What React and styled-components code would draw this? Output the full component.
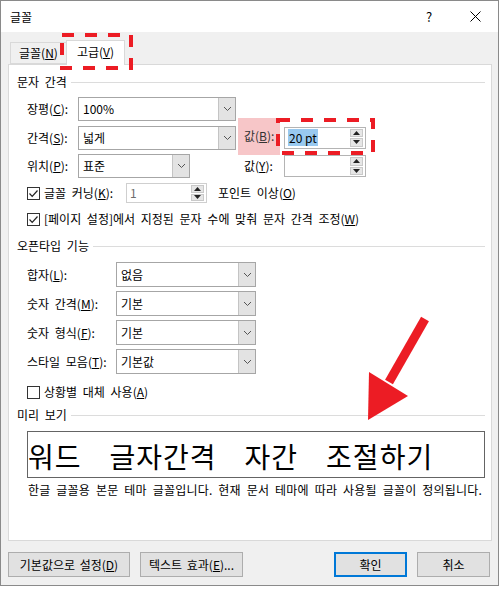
import styled, { createGlobalStyle } from 'styled-components';

const GlobalStyle = createGlobalStyle`
  html, body {
    margin: 0;
    padding: 0;
    background: #ffffff;
  }
  body {
    font-family: "Malgun Gothic", "Noto Sans CJK KR", "Noto Sans", sans-serif;
    font-size: 12px;
    word-spacing: 3px;
    color: #000;
  }
`;

// 창 전체
const Window = styled.div`
  position: relative;
  width: 497px;
  height: 584px;
  border: 1px solid #8a8a8a;
  background: #f0f0f0;
  display: flex;
  flex-direction: column;
`;

const TitleBar = styled.div`
  height: 31px;
  background: #fff;
  display: flex;
  align-items: center;
  padding-left: 9px;
  font-size: 12px;
`;

const TitleText = styled.div`
  flex: 1;
  line-height: 16px;
`;

const TitleButton = styled.div`
  width: 46px;
  height: 31px;
  display: flex;
  align-items: center;
  justify-content: center;
  font-size: 13px;
`;

const Body = styled.div`
  flex: 1;
  display: flex;
  flex-direction: column;
  padding: 8px 6px 8px 7px;
`;

const TabStrip = styled.div`
  display: flex;
  align-items: flex-end;
  height: 24px;
  padding-left: 2px;
  position: relative;
  z-index: 1;
`;

const Tab = styled.div`
  height: ${p => (p.$active ? '25px' : '22px')};
  margin-bottom: ${p => (p.$active ? '-1px' : '0')};
  padding: 0 ${p => (p.$active ? '10px' : '8px')};
  background: ${p => (p.$active ? '#fff' : '#f0f0f0')};
  border: 1px solid #d9d9d9;
  border-bottom: ${p => (p.$active ? 'none' : '1px solid #d9d9d9')};
  border-right: ${p => (p.$active ? '1px solid #d9d9d9' : 'none')};
  box-sizing: border-box;
  display: flex;
  align-items: ${p => (p.$active ? 'center' : 'flex-end')};
  padding-bottom: 2px;
  line-height: 16px;
`;

const Panel = styled.div`
  height: 477px;
  box-sizing: border-box;
  background: #fff;
  border: 1px solid #d9d9d9;
  padding: 9px 6px 0 8px;
  display: flex;
  flex-direction: column;
`;

const SectionHeader = styled.div`
  display: flex;
  align-items: center;
  gap: 4px;
  height: 16px;
  line-height: 16px;
  margin-top: ${p => p.$top || 0}px;
  &::after {
    content: '';
    flex: 1;
    height: 1px;
    background: #dcdcdc;
  }
`;

const SpacingGrid = styled.div`
  display: grid;
  grid-template-columns: 51px 160px 46px 82px;
  grid-auto-rows: 24px;
  row-gap: 4.6px;
  align-items: center;
  margin: 7px 0 0 10px;
`;

const OpenTypeGrid = styled.div`
  display: grid;
  grid-template-columns: 89px 140px;
  grid-auto-rows: 25px;
  row-gap: 4px;
  align-items: center;
  margin: 8px 0 0 10px;
`;

const Label = styled.div`
  line-height: 16px;
  white-space: nowrap;
`;

const ValueLabel = styled.div`
  align-self: stretch;
  display: flex;
  align-items: center;
  width: 42px;
  padding-left: 6px;
  box-sizing: border-box;
  line-height: 16px;
  color: ${p => (p.$highlight ? '#333' : '#000')};
  background: ${p => (p.$highlight ? '#f7c6c8' : 'transparent')};
  margin: ${p => (p.$highlight ? '-8px 0 -5px' : '0')};
`;

const Combo = styled.div`
  width: ${p => p.$width}px;
  height: ${p => p.$height || 24}px;
  box-sizing: border-box;
  border: 1px solid #a6a6a6;
  background: #fff;
  display: flex;
`;

const ComboText = styled.div`
  flex: 1;
  padding-left: 4px;
  display: flex;
  align-items: center;
  line-height: 16px;
`;

const ComboButton = styled.div`
  width: 16px;
  background: #e3e3e3;
  border-left: 1px solid #c4c4c4;
  display: flex;
  align-items: center;
  justify-content: center;
`;

const Spin = styled.div`
  width: ${p => p.$width || 82}px;
  height: ${p => p.$height || 22}px;
  box-sizing: border-box;
  border: 1px solid ${p => (p.$muted ? '#cfcfcf' : '#b4b4b4')};
  background: #fff;
  display: flex;
  align-items: center;
  justify-self: start;
`;

const SpinText = styled.div`
  flex: 1;
  padding-left: 3px;
  line-height: 16px;
  color: ${p => (p.$muted ? '#6d6d6d' : '#000')};
`;

const Selected = styled.span`
  background: #99c9ef;
  padding: 0 1px;
  word-spacing: 0;
`;

const SpinButtons = styled.div`
  width: 15px;
  height: 100%;
  padding: 1px 2px 1px 0;
  box-sizing: border-box;
  display: flex;
  flex-direction: column;
  gap: 1px;
`;

const SpinButton = styled.div`
  flex: 1;
  background: #e6e6e6;
  border: 1px solid #c9c9c9;
  display: flex;
  align-items: center;
  justify-content: center;
`;

const CheckRow = styled.div`
  display: flex;
  align-items: center;
  margin: ${p => p.$top || 0}px 0 0 10px;
  height: ${p => p.$height || 16}px;
  line-height: 16px;
  white-space: nowrap;
`;

const Box = styled.div`
  width: 13px;
  height: 13px;
  box-sizing: border-box;
  border: 1px solid #333;
  background: #fff;
  margin-right: 4px;
  display: flex;
  align-items: center;
  justify-content: center;
`;

const KerningLabel = styled.div`
  width: 82px;
`;

const AfterText = styled.div`
  margin-left: 11px;
`;

const Preview = styled.div`
  margin: 8px 0 0 10px;
  width: 458px;
  height: 47px;
  box-sizing: border-box;
  border: 1px solid #646464;
  display: flex;
  align-items: center;
  gap: 28px;
  padding: 3px 0 0 0;
  font-size: 28px;
  line-height: 30px;
  letter-spacing: 1px;
  word-spacing: 0;
  white-space: nowrap;
`;

const Description = styled.div`
  margin: 4px 0 0 11px;
  line-height: 16px;
  letter-spacing: 0.2px;
  word-spacing: 3px;
  white-space: nowrap;
`;

const ButtonRow = styled.div`
  display: flex;
  margin-top: 11px;
  gap: 10px;
`;

const Button = styled.div`
  width: ${p => p.$width}px;
  height: 25px;
  box-sizing: border-box;
  background: #e1e1e1;
  border: ${p => (p.$default ? '2px solid #0078d7' : '1px solid #adadad')};
  display: flex;
  align-items: center;
  justify-content: center;
  line-height: 16px;
  word-spacing: 2px;
  margin-left: ${p => p.$push || 0}px;
`;

const Overlay = styled.svg`
  position: absolute;
  left: -1px;
  top: -1px;
  pointer-events: none;
  z-index: 5;
`;

const Chevron = () => (
  <svg width="9" height="6" viewBox="0 0 9 6">
    <path d="M1 1 L4.5 4.5 L8 1" fill="none" stroke="#555" strokeWidth="1" />
  </svg>
);

const Check = () => (
  <svg width="11" height="11" viewBox="0 0 11 11">
    <path d="M1.5 5.5 L4.2 8.3 L9.5 2.5" fill="none" stroke="#222" strokeWidth="1.2" />
  </svg>
);

function Dropdown({ width, height, value }) {
  return (
    <Combo $width={width} $height={height}>
      <ComboText>{value}</ComboText>
      <ComboButton>
        <Chevron />
      </ComboButton>
    </Combo>
  );
}

function Spinner({ width, height, muted, children }) {
  return (
    <Spin $width={width} $height={height} $muted={muted}>
      <SpinText $muted={muted}>{children}</SpinText>
      <SpinButtons>
        <SpinButton>
          <svg width="7" height="4" viewBox="0 0 7 4"><path d="M0 4 L3.5 0 L7 4 Z" fill="#222" /></svg>
        </SpinButton>
        <SpinButton>
          <svg width="7" height="4" viewBox="0 0 7 4"><path d="M0 0 L3.5 4 L7 0 Z" fill="#222" /></svg>
        </SpinButton>
      </SpinButtons>
    </Spin>
  );
}

function Key({ children }) {
  return <u>{children}</u>;
}

export default function App() {
  return (
    <>
      <GlobalStyle />
      <Window>
        <TitleBar>
          <TitleText>글꼴</TitleText>
          <TitleButton>?</TitleButton>
          <TitleButton>
            <svg width="11" height="11" viewBox="0 0 11 11">
              <path d="M0.5 0.5 L10.5 10.5 M10.5 0.5 L0.5 10.5" stroke="#000" strokeWidth="1" />
            </svg>
          </TitleButton>
        </TitleBar>
        <Body>
          <TabStrip>
            <Tab>글꼴(<Key>N</Key>)</Tab>
            <Tab $active>고급(<Key>V</Key>)</Tab>
          </TabStrip>
          <Panel>
            <SectionHeader>문자 간격</SectionHeader>
            <SpacingGrid>
              <Label>장평(<Key>C</Key>):</Label>
              <Dropdown width={158} value="100%" />
              <div />
              <div />

              <Label>간격(<Key>S</Key>):</Label>
              <Dropdown width={158} value="넓게" />
              <ValueLabel $highlight>값(<Key>B</Key>):</ValueLabel>
              <Spinner><Selected>20 pt</Selected></Spinner>

              <Label>위치(<Key>P</Key>):</Label>
              <Dropdown width={112} value="표준" />
              <ValueLabel>값(<Key>Y</Key>):</ValueLabel>
              <Spinner />
            </SpacingGrid>
            <CheckRow $top={5} $height={20}>
              <Box><Check /></Box>
              <KerningLabel>글꼴 커닝(<Key>K</Key>):</KerningLabel>
              <Spinner width={81} height={20} muted>1</Spinner>
              <AfterText>포인트 이상(<Key>O</Key>)</AfterText>
            </CheckRow>
            <CheckRow $top={8}>
              <Box><Check /></Box>
              [페이지 설정]에서 지정된 문자 수에 맞춰 문자 간격 조정(<Key>W</Key>)
            </CheckRow>

            <SectionHeader $top={11}>오픈타입 기능</SectionHeader>
            <OpenTypeGrid>
              <Label>합자(<Key>L</Key>):</Label>
              <Dropdown width={140} height={25} value="없음" />
              <Label>숫자 간격(<Key>M</Key>):</Label>
              <Dropdown width={140} height={25} value="기본" />
              <Label>숫자 형식(<Key>F</Key>):</Label>
              <Dropdown width={140} height={25} value="기본" />
              <Label>스타일 모음(<Key>T</Key>):</Label>
              <Dropdown width={140} height={25} value="기본값" />
            </OpenTypeGrid>
            <CheckRow $top={10}>
              <Box />
              상황별 대체 사용(<Key>A</Key>)
            </CheckRow>

            <SectionHeader $top={7}>미리 보기</SectionHeader>
            <Preview>
              <span>워드</span>
              <span>글자간격</span>
              <span>자간</span>
              <span>조절하기</span>
            </Preview>
            <Description>
              한글 글꼴용 본문 테마 글꼴입니다. 현재 문서 테마에 따라 사용될 글꼴이 정의됩니다.
            </Description>
          </Panel>
          <ButtonRow>
            <Button $width={122}>기본값으로 설정(<Key>D</Key>)</Button>
            <Button $width={103}>텍스트 효과(<Key>E</Key>)...</Button>
            <Button $width={73} $default $push={81}>확인</Button>
            <Button $width={73}>취소</Button>
          </ButtonRow>
        </Body>
        <Overlay width="499" height="586" viewBox="0 0 499 586">
          <rect x="62" y="35" width="69" height="33" fill="none" stroke="#ec1c24" strokeWidth="4" strokeDasharray="12 11" />
          <rect x="278" y="120" width="95" height="33" fill="none" stroke="#ec1c24" strokeWidth="4" strokeDasharray="12 11" />
          <line x1="425" y1="319" x2="389" y2="382" stroke="#ec1c24" strokeWidth="9" />
          <polygon points="369,372 408,396 368,420" fill="#ec1c24" />
        </Overlay>
      </Window>
    </>
  );
}
